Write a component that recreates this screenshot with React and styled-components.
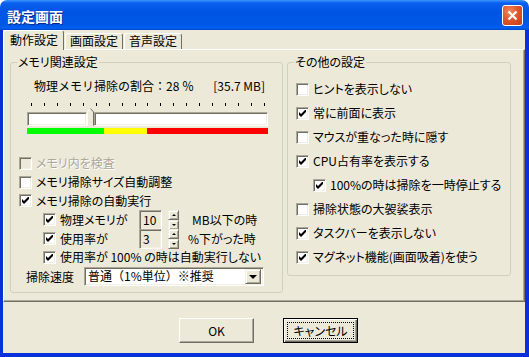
import React from 'react';
import styled, { createGlobalStyle, css } from 'styled-components';

const Global = createGlobalStyle`
  html, body { margin: 0; padding: 0; background: #fff; }
  * { box-sizing: border-box; }
`;

const Window = styled.div`
  width: 529px;
  height: 357px;
  display: flex;
  flex-direction: column;
  font-family: "Noto Sans CJK JP", "Liberation Sans", sans-serif;
  font-size: 12px;
  font-feature-settings: "palt";
  color: #000;
`;

const TitleBar = styled.div`
  height: 30px;
  flex: none;
  display: flex;
  align-items: center;
  justify-content: space-between;
  padding: 0 6px 0 7px;
  border-radius: 7px 7px 0 0;
  background: linear-gradient(
    to bottom,
    #3d95ff 0%,
    #0a5fee 10%,
    #0054e3 40%,
    #0058e8 85%,
    #0061f0 93%,
    #0046d0 100%
  );
`;

const Title = styled.span`
  color: #fff;
  font-weight: bold;
  font-size: 14px;
  line-height: 16px;
  font-feature-settings: normal;
  text-shadow: 1px 1px #0b2a8a;
  margin-top: 1px;
`;

const CloseButton = styled.div`
  width: 21px;
  height: 21px;
  border: 1px solid #fff;
  border-radius: 3px;
  display: flex;
  align-items: center;
  justify-content: center;
  background: radial-gradient(circle at 35% 30%, #f08a5e 0%, #e0582d 45%, #c63a17 100%);
`;

const Body = styled.div`
  flex: 1;
  display: flex;
  flex-direction: column;
  background: #ece9d8;
  border: solid #0831d9;
  border-width: 0 4px 4px 3px;
`;

const TabRow = styled.div`
  height: 19px;
  flex: none;
  display: flex;
  align-items: flex-end;
  gap: 1px;
  position: relative;
  z-index: 1;
`;

const Tab = styled.div`
  display: flex;
  align-items: center;
  background: #ece9d8;
  border: 1px solid;
  border-bottom: none;
  border-color: #fff #716f64 transparent #fff;
  border-radius: 3px 3px 0 0;
  line-height: 14px;
  font-feature-settings: normal;
  ${p =>
    p.$active
      ? css`
          height: 20px;
          margin-bottom: -1px;
          padding: 0 5px 2px 6px;
        `
      : css`
          height: 16px;
          padding: 0 4px 1px 4px;
        `}
`;

const Panel = styled.div`
  height: 253px;
  flex: none;
  border: 1px solid;
  border-color: #fff #716f64 #716f64 #fff;
  box-shadow: inset -1px -1px #aca899;
  display: grid;
  grid-template-columns: 273px 224px;
  column-gap: 4px;
  align-items: start;
  padding: 5px 0 0 6px;
`;

const Group = styled.fieldset`
  margin: 0;
  min-width: 0;
  padding: 0 0 ${p => p.$pb}px 0;
  border: 1px solid #d0d0bf;
  border-radius: 3px;
  display: flex;
  flex-direction: column;
`;

const Legend = styled.legend`
  padding: 0 1px;
  margin-left: 6px;
  line-height: 14px;
`;

const RatioRow = styled.div`
  margin-top: 10px;
  height: 14px;
  line-height: 14px;
  display: flex;
  justify-content: space-between;
  padding: 0 17px 0 23px;
  white-space: nowrap;
  font-feature-settings: normal;
`;

const Ticks = styled.div`
  margin: 10px 0 0 20px;
  width: 234px;
  height: 3px;
  display: flex;
  justify-content: space-between;
`;

const Tick = styled.span`
  width: 1px;
  height: 3px;
  background: #000;
`;

const Slider = styled.div`
  margin: 2px 0 0 16px;
  width: 241px;
  height: 18px;
  display: flex;
  align-items: flex-end;
`;

const sunken = css`
  border: 1px solid;
  border-color: #aca899 #fff #fff #aca899;
  box-shadow: inset 1px 1px #716f64, inset -1px -1px #f1efe2;
`;

const raised = css`
  border: 1px solid;
  border-color: #f1efe2 #716f64 #716f64 #f1efe2;
  box-shadow: inset 1px 1px #fff, inset -1px -1px #aca899;
`;

const Track = styled.div`
  ${sunken};
  height: 14px;
  background: #fff;
  width: ${p => (p.$w ? `${p.$w}px` : 'auto')};
  flex: ${p => (p.$w ? 'none' : 1)};
`;

const Bands = styled.div`
  margin: 2px 0 0 16px;
  width: 241px;
  height: 6px;
  display: flex;
`;

const Band = styled.span`
  background: ${p => p.$c};
  width: ${p => (p.$w ? `${p.$w}px` : 'auto')};
  flex: ${p => (p.$w ? 'none' : 1)};
`;

const Rows = styled.div`
  margin-top: ${p => p.$mt}px;
  display: flex;
  flex-direction: column;
`;

const CheckRow = styled.div`
  height: ${p => p.$h}px;
  display: flex;
  align-items: center;
  gap: 4px;
  padding-left: ${p => p.$indent}px;
  white-space: nowrap;
  line-height: 14px;
  color: ${p => (p.$disabled ? '#aca899' : '#000')};
  text-shadow: ${p => (p.$disabled ? '1px 1px #fff' : 'none')};
`;

const Box = styled.span`
  ${sunken};
  width: 13px;
  height: 13px;
  flex: none;
  display: flex;
  align-items: center;
  justify-content: center;
  background: ${p => (p.$disabled ? '#ece9d8' : '#fff')};
`;

const SpinLabel = styled.span`
  width: 75px;
  flex: none;
`;

const SpinInput = styled.span`
  ${sunken};
  width: 23px;
  height: 20px;
  flex: none;
  padding: 2px 0 0 3px;
  line-height: 14px;
  background: #ece9d8;
`;

const SpinButtons = styled.span`
  width: 11px;
  height: 20px;
  margin-left: 2px;
  display: flex;
  flex-direction: column;
`;

const SpinBtn = styled.span`
  ${raised};
  flex: 1;
  display: flex;
  align-items: center;
  justify-content: center;
  background: #ece9d8;
  &::after {
    content: '';
    border-left: 2px solid transparent;
    border-right: 2px solid transparent;
    ${p => (p.$down ? 'border-top: 2px solid #000;' : 'border-bottom: 2px solid #000;')}
  }
`;

const Suffix = styled.span`
  margin-left: ${p => p.$ml}px;
`;

const SelectRow = styled.div`
  height: 19px;
  display: flex;
  align-items: center;
  padding-left: 15px;
`;

const SelectLabel = styled.span`
  width: 58px;
  flex: none;
`;

const Select = styled.div`
  ${sunken};
  width: 180px;
  height: 19px;
  background: #fff;
  display: flex;
  align-items: center;
  padding: 0 2px 0 3px;
  line-height: 14px;
  white-space: nowrap;
`;

const SelectText = styled.span`
  flex: 1;
  font-feature-settings: normal;
`;

const DropBtn = styled.span`
  ${raised};
  width: 16px;
  height: 15px;
  background: #ece9d8;
  display: flex;
  align-items: center;
  justify-content: center;
  &::after {
    content: '';
    border-left: 4px solid transparent;
    border-right: 4px solid transparent;
    border-top: 4px solid #000;
    margin-top: 1px;
  }
`;

const ButtonBar = styled.div`
  display: flex;
  gap: 29px;
  padding: 16px 0 0 176px;
`;

const Button = styled.div`
  width: 75px;
  height: 25px;
  display: flex;
  align-items: stretch;
  padding: 3px;
  background: #ece9d8;
  border: 1px solid;
  line-height: 14px;
  ${p =>
    p.$default
      ? css`
          border-color: #000;
          box-shadow: inset 1px 1px #fff, inset -1px -1px #716f64, inset -2px -2px #aca899;
        `
      : css`
          border-color: #fff #716f64 #716f64 #fff;
          box-shadow: inset -1px -1px #aca899;
        `}
`;

const ButtonLabel = styled.span`
  flex: 1;
  display: flex;
  align-items: center;
  justify-content: center;
  border: 1px dotted ${p => (p.$focus ? '#000' : 'transparent')};
`;

function Check({ checked, disabled }) {
  return (
    <Box $disabled={disabled}>
      {checked && (
        <svg width="7" height="7" viewBox="0 0 7 7">
          <polygon points="0,2 2,4 7,-1 7,2 2,7 0,5" fill="#000" />
        </svg>
      )}
    </Box>
  );
}

function Thumb() {
  return (
    <svg width="7" height="18" viewBox="0 0 7 18">
      <polygon points="0.5,17.5 0.5,4 3.5,0.5 6.5,4 6.5,17.5" fill="#ece9d8" stroke="none" />
      <polyline points="0.5,17.5 0.5,4 3.5,0.5" fill="none" stroke="#fff" />
      <polyline points="3.5,0.5 6.5,4 6.5,17.5" fill="none" stroke="#716f64" />
    </svg>
  );
}

const ticks = Array.from({ length: 19 });

const otherOptions = [
  { text: 'ヒントを表示しない' },
  { text: '常に前面に表示', checked: true },
  { text: 'マウスが重なった時に隠す' },
  { text: 'CPU占有率を表示する', checked: true },
  { text: '100%の時は掃除を一時停止する', checked: true, nested: true },
  { text: '掃除状態の大袈裟表示' },
  { text: 'タスクバーを表示しない', checked: true },
  { text: 'マグネット機能(画面吸着)を使う', checked: true },
];

function Spin({ label, value, suffix, gap }) {
  return (
    <CheckRow $h={18.8} $indent={32}>
      <Check checked />
      <SpinLabel>{label}</SpinLabel>
      <SpinInput>{value}</SpinInput>
      <SpinButtons>
        <SpinBtn />
        <SpinBtn $down />
      </SpinButtons>
      <Suffix $ml={gap}>{suffix}</Suffix>
    </CheckRow>
  );
}

export default function App() {
  return (
    <>
      <Global />
      <Window>
        <TitleBar>
          <Title>設定画面</Title>
          <CloseButton>
            <svg width="11" height="11" viewBox="0 0 11 11">
              <path d="M1.5 1.5 L9.5 9.5 M9.5 1.5 L1.5 9.5" stroke="#fff" strokeWidth="2.2" />
            </svg>
          </CloseButton>
        </TitleBar>
        <Body>
          <TabRow>
            <Tab $active>動作設定</Tab>
            <Tab>画面設定</Tab>
            <Tab>音声設定</Tab>
          </TabRow>
          <Panel>
            <Group $pb={6}>
              <Legend>メモリ関連設定</Legend>
              <RatioRow>
                <span>物理メモリ掃除の割合：28 ％</span>
                <span>[35.7 MB]</span>
              </RatioRow>
              <Ticks>
                {ticks.map((_, i) => (
                  <Tick key={i} />
                ))}
              </Ticks>
              <Slider>
                <Track $w={60} />
                <Thumb />
                <Track />
              </Slider>
              <Bands>
                <Band $c="#00ff00" $w={77} />
                <Band $c="#ffff00" $w={43} />
                <Band $c="#ff0000" />
              </Bands>
              <Rows $mt={20}>
                <CheckRow $h={18.8} $indent={8} $disabled>
                  <Check disabled />
                  メモリ内を検査
                </CheckRow>
                <CheckRow $h={18.8} $indent={8}>
                  <Check />
                  メモリ掃除サイズ自動調整
                </CheckRow>
                <CheckRow $h={18.8} $indent={8}>
                  <Check checked />
                  メモリ掃除の自動実行
                </CheckRow>
                <Spin label="物理メモリが" value="10" suffix="MB以下の時" gap={9} />
                <Spin label="使用率が" value="3" suffix="%下がった時" gap={5} />
                <CheckRow $h={18.8} $indent={32}>
                  <Check checked />
                  使用率が 100% の時は自動実行しない
                </CheckRow>
                <SelectRow>
                  <SelectLabel>掃除速度</SelectLabel>
                  <Select>
                    <SelectText>普通（1%単位）※推奨</SelectText>
                    <DropBtn />
                  </Select>
                </SelectRow>
              </Rows>
            </Group>
            <Group $pb={6}>
              <Legend>その他の設定</Legend>
              <Rows $mt={8}>
                {otherOptions.map(o => (
                  <CheckRow key={o.text} $h={24} $indent={o.nested ? 25 : 8}>
                    <Check checked={o.checked} />
                    {o.text}
                  </CheckRow>
                ))}
              </Rows>
            </Group>
          </Panel>
          <ButtonBar>
            <Button>
              <ButtonLabel>OK</ButtonLabel>
            </Button>
            <Button $default>
              <ButtonLabel $focus>キャンセル</ButtonLabel>
            </Button>
          </ButtonBar>
        </Body>
      </Window>
    </>
  );
}
